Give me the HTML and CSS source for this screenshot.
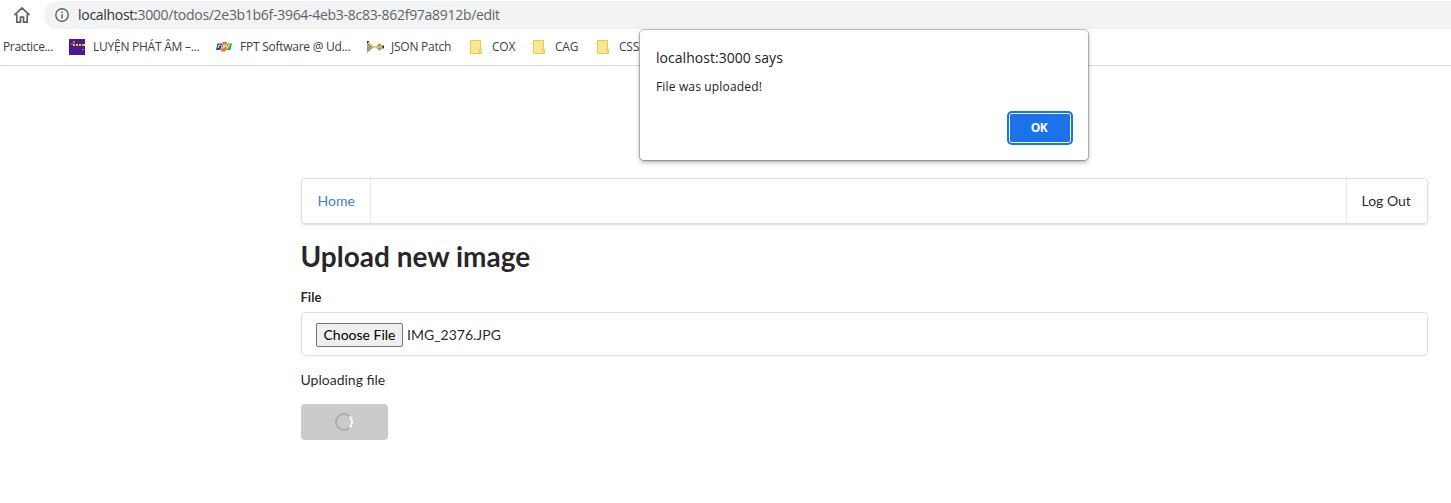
FILE: index.html
```html
<!DOCTYPE html>
<html lang="en">
<head>
<meta charset="utf-8">
<title>Upload new image</title>
<link rel="stylesheet" href="styles.css">
</head>
<body>
<header class="browser">
  <div class="toolbar">
    <svg class="home-icon" width="18" height="18" viewBox="0 0 18 18"><path d="M1.400 9.200 9 2l7.600 7.200M3.800 8.200v7.900h3.700v-5h3v5h3.700V8.200" fill="none" stroke="#5f6368" stroke-width="1.700"/></svg>
    <div class="address">
      <svg class="info-icon" width="14" height="14" viewBox="0 0 14 14"><circle cx="7" cy="7" r="6.200" fill="none" stroke="#5f6368" stroke-width="1.400"/><path d="M7 6.200v4.300M7 3.500v1.500" stroke="#5f6368" stroke-width="1.500"/></svg>
      <span class="url"><span class="host">localhost:</span>3000/todos/2e3b1b6f-3964-4eb3-8c83-862f97a8912b/edit</span>
    </div>
  </div>
  <nav class="bookmarks">
    <a class="bookmark practice"><span>Practice...</span></a>
    <a class="bookmark luyen">
      <svg width="16" height="16" viewBox="0 0 16 16"><path fill="#4b1a8c" d="M0 0h16v16H0z"/><path fill="#e33" d="M2 4h2v2H2z"/><path fill="#3b5" d="M4 2h2v2H4z"/><path fill="#f5c327" d="M4 5h2v2H4zM7 5h2v2H7zM10 5h2v2h-2zM13 5h3v2h-3z"/><path fill="#9878bd" d="M13 10h2v1h-2z"/></svg>
      <span>LUYỆN PHÁT ÂM –...</span></a>
    <a class="bookmark fpt">
      <svg width="16" height="16" viewBox="0 0 16 16"><path fill="#174ea0" d="M1.500 4.500H6L4.500 11H0z"/><path fill="#f26f21" d="M6.500 3H11L9.500 12.500H5z"/><path fill="#35ad48" d="M11.500 4.500H16L14.500 11H10z"/><path stroke="#fff" fill="none" d="M4.500 6H3L2 9M7 9.500 7.800 6h1.400l-.5 2H7.500M11.500 9.500l1-3.500H14"/></svg>
      <span>FPT Software @ Ud...</span></a>
    <a class="bookmark json">
      <svg width="17" height="16" viewBox="0 0 17 16"><path fill="#999" d="M0 2l7 6-7 6zM8.500 8 12.500 4l4 4-4 4z"/><path d="M1 3l5 5h10" fill="none" stroke="#e8c33c" stroke-width="1.300"/><path fill="#222" d="M0 2h2v1H1v1H0zM15.500 6.500H17v3h-1.500z"/></svg>
      <span>JSON Patch</span></a>
    <a class="bookmark cox"><svg width="13" height="15" viewBox="0 0 13 15"><use href="#folder"/></svg><span>COX</span></a>
    <a class="bookmark cag"><svg width="13" height="15" viewBox="0 0 13 15"><use href="#folder"/></svg><span>CAG</span></a>
    <a class="bookmark css"><svg width="13" height="15" viewBox="0 0 13 15"><g id="folder"><path d="M.5.500h10v9h1v4H.5z" fill="#ffe692" stroke="#e9c74c"/><path d="M9.500 13.500v-4h2v4z" fill="#ffe692" stroke="#e9c74c"/></g></svg><span>CSS</span></a>
  </nav>
</header>
<main class="page">
  <nav class="menu"><a class="item home">Home</a><a class="item logout">Log Out</a></nav>
  <h1>Upload new image</h1>
  <form>
    <label class="label">File</label>
    <div class="file-input"><button type="button" class="choose">Choose File</button><span class="filename">IMG_2376.JPG</span></div>
    <p class="status">Uploading file</p>
    <div class="upload"><svg width="20" height="20" viewBox="0 0 20 20"><circle cx="10" cy="10" r="8" fill="none" stroke="#abacad" stroke-width="2"/><path d="M15.660 4.340A8 8 0 0 1 15.660 15.660" fill="none" stroke="#fff" stroke-width="2"/></svg></div>
  </form>
</main>
<section class="dialog" role="dialog">
  <div class="dialog-title"><span>localhost:3000 says</span></div>
  <div class="dialog-text"><span>File was uploaded!</span></div>
  <button type="button" class="ok">OK</button>
</section>
</body>
</html>
```
FILE: styles.css
```css
* { box-sizing: border-box; }
body { margin: 0; width: 1451px; height: 503px; overflow: hidden; background: #fff; font-family: Lato, sans-serif; font-size: 14px; color: rgba(0,0,0,.87); }
.browser { height: 66px; border-bottom: 1px solid #d9dadc; font-family: "Open Sans", "Noto Sans", sans-serif; }
.toolbar { display: flex; height: 29px; padding-top: 1px; }
.home-icon { margin: 5px 13px 0; }
.address { flex: 1; display: flex; align-items: center; height: 28px; padding-left: 11px; background: #f1f3f4; border-radius: 14px 0 0 14px; }
.url { margin-left: 9px; padding-bottom: 1px; font-size: 14px; letter-spacing: -.29px; color: #5f6368; white-space: nowrap; }
.host { color: #303236; }
.bookmarks { display: flex; height: 36px; }
.bookmark { display: flex; align-items: center; flex: none; color: #3c4043; font-size: 12px; letter-spacing: -.25px; white-space: nowrap; }
.bookmark span { padding-bottom: 2px; }
.bookmark svg { margin-right: 8px; flex: none; }
.practice { width: 66px; margin-left: 3px; letter-spacing: -.35px; }
.luyen { width: 147px; }
.fpt { width: 151px; }
.json { width: 103px; }
.json svg { margin-right: 7px; }
.cox { width: 63px; }
.cag { width: 64px; }
.cox svg, .cag svg, .css svg { margin-right: 9px; }
.page { width: 1127px; margin: 112px 0 0 301px; }
.menu { display: flex; justify-content: space-between; height: 46px; border: 1px solid #dededf; border-radius: 4px; box-shadow: 0 1px 2px rgba(34,36,38,.15); }
.item { display: flex; align-items: center; padding-bottom: 2px; }
.home { width: 69px; padding-left: 15.500px; border-right: 1px solid #e8e8e9; color: #4183c4; }
.logout { width: 81px; padding-left: 14.500px; border-left: 1px solid #e8e8e9; }
h1 { margin: 14px 0 0 -.5px; font-size: 28px; line-height: 36px; font-weight: 700; }
.label { display: block; margin: 14px 0 0 -.5px; font-size: 13px; line-height: 18px; font-weight: 700; }
.file-input { display: flex; align-items: center; height: 44px; margin-top: 6px; padding: 1px 14px 0; border: 1px solid #dededf; border-radius: 4px; }
.choose { width: 87px; height: 24px; padding: 0; border: 1px solid #767676; border-radius: 2px; background: #efefef; font: 14px Lato, sans-serif; color: #000; }
.filename { margin-left: 4px; }
.status { margin: 14px 0 0 -.5px; line-height: 20px; }
.upload { display: flex; align-items: center; justify-content: center; width: 87px; height: 36px; margin-top: 14px; padding-right: 1px; border-radius: 4px; background: #cacbcd; }
.dialog { position: absolute; left: 640px; top: 30px; width: 448px; height: 130px; padding: 18px 16px; background: #fff; border-radius: 4px; box-shadow: 0 0 0 1px rgba(0,0,0,.22), 0 2px 5px rgba(0,0,0,.35); font-family: "Open Sans", "Noto Sans", sans-serif; color: #202124; }
.dialog-title { font-size: 14px; line-height: 20px; letter-spacing: .04px; }
.dialog-text { margin-top: 10px; font-size: 12px; line-height: 18px; letter-spacing: .16px; }
.ok { display: block; margin: 17px 1px 0 auto; width: 62px; height: 30px; padding: 0 2px 2px 0; border: 1px solid #fff; border-radius: 3px; background: #1a73e8; color: #fff; box-shadow: 0 0 0 2px #1a73e8; font: 700 12px "Open Sans", sans-serif; letter-spacing: -.4px; }
```
